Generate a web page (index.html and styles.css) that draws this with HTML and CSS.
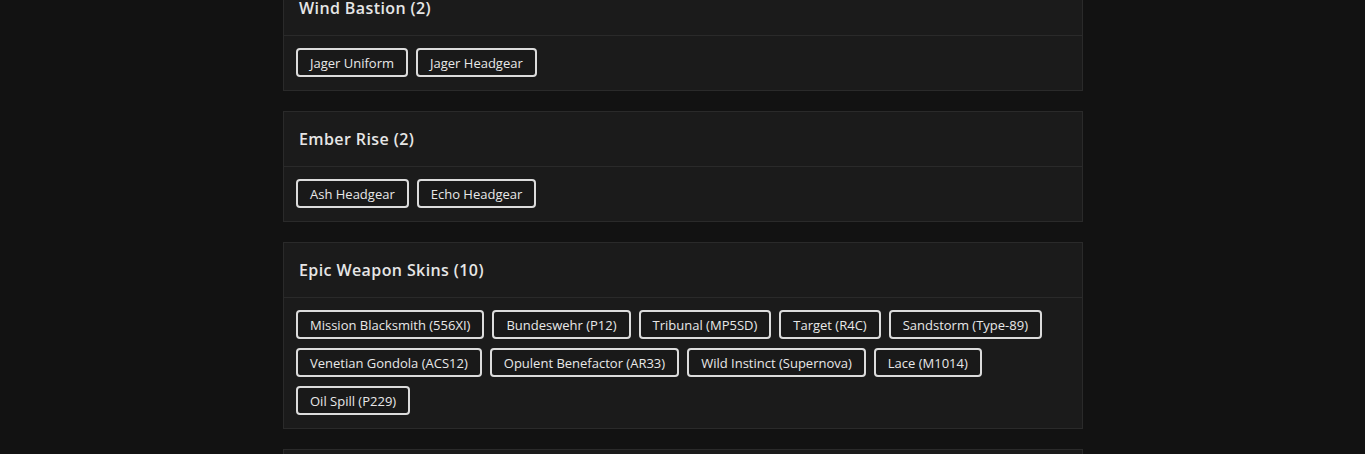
FILE: index.html
```html
<!DOCTYPE html>
<html>
<head>
<meta charset="utf-8">
<link rel="stylesheet" href="styles.css">
</head>
<body>
<main class="list">
  <section class="card">
    <h2 class="card-title">Wind Bastion (2)</h2>
    <div class="chips">
      <span class="chip">Jager Uniform</span>
      <span class="chip">Jager Headgear</span>
    </div>
  </section>
  <section class="card">
    <h2 class="card-title">Ember Rise (2)</h2>
    <div class="chips">
      <span class="chip">Ash Headgear</span>
      <span class="chip">Echo Headgear</span>
    </div>
  </section>
  <section class="card">
    <h2 class="card-title">Epic Weapon Skins (10)</h2>
    <div class="chips">
      <span class="chip">Mission Blacksmith (556XI)</span>
      <span class="chip">Bundeswehr (P12)</span>
      <span class="chip">Tribunal (MP5SD)</span>
      <span class="chip">Target (R4C)</span>
      <span class="chip">Sandstorm (Type-89)</span>
      <span class="chip">Venetian Gondola (ACS12)</span>
      <span class="chip">Opulent Benefactor (AR33)</span>
      <span class="chip">Wild Instinct (Supernova)</span>
      <span class="chip">Lace (M1014)</span>
      <span class="chip">Oil Spill (P229)</span>
    </div>
  </section>
  <section class="card card-next"></section>
</main>
</body>
</html>
```
FILE: styles.css
```css
html, body {
  margin: 0;
  padding: 0;
  background: #121212;
  font-family: "Open Sans", "Noto Sans", sans-serif;
  color: #e4e4e4;
}
.list {
  width: 800px;
  margin: -20px auto 0;
  display: flex;
  flex-direction: column;
  gap: 20px;
  padding-left: 1px;
}
.card {
  background: #1b1b1b;
  border: 1px solid #2a2a2a;
}
.card-next {
  height: 40px;
}
.card-title {
  margin: 0;
  height: 54px;
  display: flex;
  align-items: center;
  padding: 0 15px;
  font-size: 16px;
  font-weight: 600;
  letter-spacing: 0.4px;
  color: #e6e6e6;
  border-bottom: 1px solid #2a2a2a;
}
.chips {
  display: flex;
  flex-wrap: wrap;
  gap: 9px 8px;
  padding: 12px 12px 13px;
}
.chip {
  box-sizing: border-box;
  height: 29px;
  display: inline-flex;
  align-items: center;
  padding: 0 12px;
  border: 2px solid #dcdcdc;
  border-radius: 4px;
  background: #191919;
  font-size: 13px;
  color: #e8e8e8;
}
```
